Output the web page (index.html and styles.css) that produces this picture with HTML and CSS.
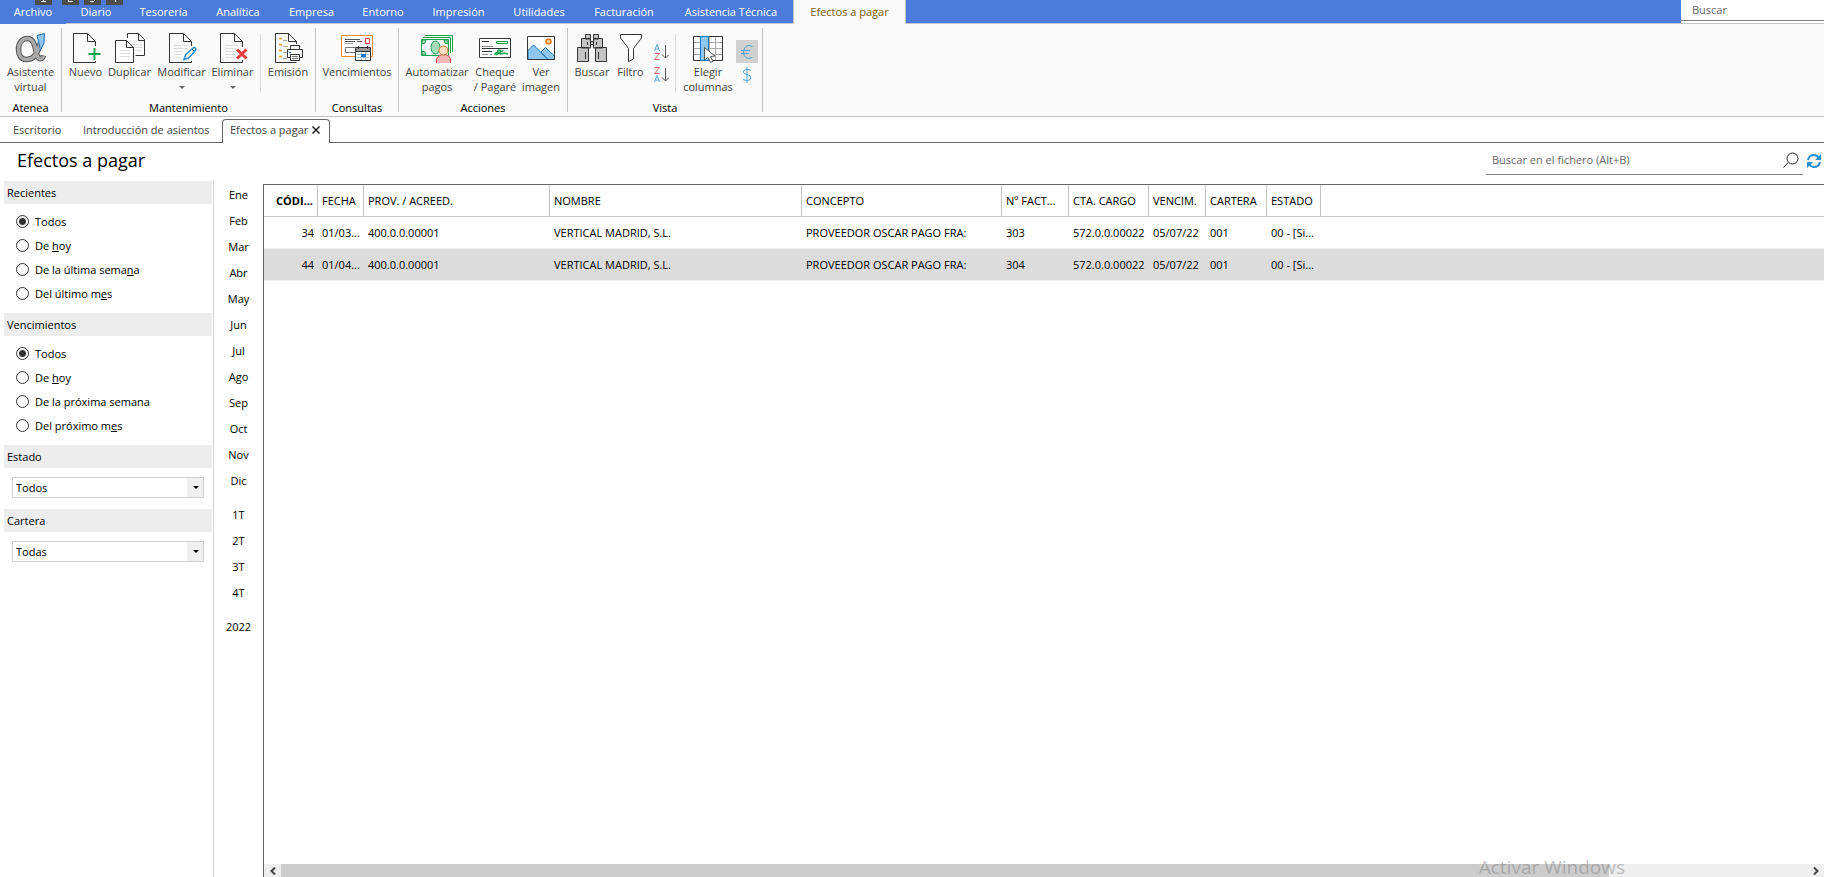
FILE: index.html
```html
<!DOCTYPE html>
<html lang="es">
<head>
<meta charset="utf-8">
<title>Efectos a pagar</title>
<link rel="stylesheet" href="styles.css">
</head>
<body>
<header class="menubar">
  <nav class="menu">
    <a class="menu-item file" href="#">Archivo</a>
    <a class="menu-item" href="#">Diario</a>
    <a class="menu-item" href="#">Tesorería</a>
    <a class="menu-item" href="#">Analítica</a>
    <a class="menu-item" href="#">Empresa</a>
    <a class="menu-item" href="#">Entorno</a>
    <a class="menu-item" href="#">Impresión</a>
    <a class="menu-item" href="#">Utilidades</a>
    <a class="menu-item" href="#">Facturación</a>
    <a class="menu-item" href="#">Asistencia Técnica</a>
    <a class="menu-item active" href="#">Efectos a pagar</a>
  </nav>
  <input class="top-search" type="text" placeholder="Buscar" aria-label="Buscar">
  <div class="keytips" aria-hidden="true">
    <svg class="keytip" viewBox="0 0 17 5"><path d="M6 1.500H11M8.500 0V1" stroke="#fff"/></svg>
    <svg class="keytip" viewBox="0 0 17 5"><path d="M6 1.500H11M6.500 0V1" stroke="#fff"/></svg>
    <svg class="keytip" viewBox="0 0 17 5"><path d="M6 1.500H10M10.500 0V1" stroke="#fff"/></svg>
    <svg class="keytip" viewBox="0 0 17 5"><path d="M9.500 0V2" stroke="#fff"/></svg>
  </div>
</header>

<section class="ribbon">
  <div class="group atenea">
    <div class="tools">
      <button class="tool">
        <svg class="icon" viewBox="0 0 32 32" fill="none"><path d="M26 9C22 24 18 27.500 11.500 27.500C6 27.500 3.500 23 3.500 17.500C3.500 11 7 6.500 12.500 6.500C20 6.500 20 17 22 23C23.500 28 27 28 28.500 23.500" stroke="#555" stroke-width="5.500"/><path d="M25.500 10C22 24 18 27.500 11.500 27.500C6 27.500 3.500 23 3.500 17.500C3.500 11 7 6.500 12.500 6.500C20 6.500 20 17 22 23C23.500 28 27 28 28.500 24" stroke="#aaa" stroke-width="3.500"/><path d="M22 3.500 29.500 1.500 29 11 25.500 18Z" fill="#8ec6ee" stroke="#1e73b8"/></svg>
        <span>Asistente<br>virtual</span></button>
    </div>
    <h2 class="group-name">Atenea</h2>
  </div>
  <div class="group mantenimiento">
    <div class="tools">
      <button class="tool">
        <svg class="icon" viewBox="0 0 32 32" fill="none"><path d="M25.500 14V9.500L17.500 1.500H3.500V30.500H25.500V29M17.500 1.500V9.500H25.500" stroke="#333"/><path d="M24.500 16V28M18.500 22H30.500" stroke="#16a34f" stroke-width="2"/></svg>
        <span>Nuevo</span></button>
      <button class="tool">
        <svg class="icon" viewBox="0 0 32 32" fill="none"><path d="M13.500 1.500H24.500L30.500 7.500V23.500H21.500M13.500 1.500V6M24.500 1.500V8.500H30.500" stroke="#333"/><path d="M17 12.500H28M21 15.500H28M21 18.500H28" stroke="#ddd"/><path d="M1.500 8.500H12.500L19.500 15.500V30.500H1.500ZM12.500 8.500V15.500H19.500" fill="#fff" stroke="#333"/><path d="M6 18.500H16M6 21.500H16M6 24.500H16" stroke="#ddd"/></svg>
        <span>Duplicar</span></button>
      <button class="tool">
        <svg class="icon" viewBox="0 0 32 32" fill="none"><path d="M25.500 14V9.500L17.500 1.500H3.500V30.500H25.500V29M17.500 1.500V9.500H25.500" stroke="#333"/><path d="M8 13.500H21M8 16.500H21M8 19.500H17M8 22.500H16M8 25.500H15" stroke="#ddd"/><path d="M18 27.500 19.500 23 27 16Q29 14.500 30 17Q29.500 19 22.500 26Z" fill="#fff" stroke="#2b8fd0" stroke-width="1.500"/><path d="M26 17 29 20" stroke="#2b8fd0"/></svg>
        <span>Modificar</span><i class="drop"></i></button>
      <button class="tool">
        <svg class="icon" viewBox="0 0 32 32" fill="none"><path d="M25.500 15V9.500L17.500 1.500H3.500V30.500H25.500V28M17.500 1.500V9.500H25.500" stroke="#333"/><path d="M8 13.500H21M8 16.500H19M8 19.500H18M8 22.500H18M8 25.500H17" stroke="#ddd"/><path d="M20 17.500 29.500 26.500M29.500 17.500 20 26.500" stroke="#e83b3b" stroke-width="3"/></svg>
        <span>Eliminar</span><i class="drop"></i></button>
      <div class="divider"></div>
      <button class="tool">
        <svg class="icon" viewBox="0 0 32 32" fill="none"><path d="M24.500 12V9.500L16.500 1.500H3.500V30.500H24.500M16.500 1.500V9.500H24.500" stroke="#333"/><path d="M7 6.500H10M7 12.500H10M7 18.500H10M7 24.500H10" stroke="#f59a23" stroke-width="1.500"/><path d="M11 8.500H15M11 14.500H16M11 20.500H15M11 26.500H15" stroke="#aaa"/><path d="M18.500 17V13.500H27.500V17M18.500 25.500H15.500V17.500H30.500V25.500H27.500" fill="#fff" stroke="#333"/><path d="M18.500 22.500H27.500V28.500H18.500Z" fill="#fff" stroke="#333"/><path d="M20 24.500H26M20 26.500H26" stroke="#777"/><path d="M17 20.500H19" stroke="#1e73d0"/></svg>
        <span>Emisión</span></button>
    </div>
    <h2 class="group-name">Mantenimiento</h2>
  </div>
  <div class="group consultas">
    <div class="tools">
      <button class="tool">
        <svg class="icon" viewBox="0 0 32 32" fill="none"><path d="M.500 3.500H31.500V24.500H.500Z" fill="#fff" stroke="#ed8b2d"/><path d="M4 7.500H19M4 9.500H14M16 9.500H21" stroke="#555"/><path d="M4 11.500H12" stroke="#aaa"/><path d="M24.500 6.500H28.500V11.500H24.500Z" stroke="#e83b3b"/><path d="M14 15.500H4.500V20.500H14" stroke="#777"/><path d="M14.500 15.500H29.500V28.500H14.500Z" fill="#fff" stroke="#333"/><path d="M15 16H29V19H15Z" fill="#999"/><path d="M17.500 14V17M26.500 14V17M15 19.500H29" stroke="#333"/><path d="M16 22.500H28M16 25.500H28M20.500 20V28M24.500 20V28" stroke="#a9c3dc"/><path d="M20 22H25V25H20Z" fill="#1673c0"/></svg>
        <span>Vencimientos</span></button>
    </div>
    <h2 class="group-name">Consultas</h2>
  </div>
  <div class="group acciones">
    <div class="tools">
      <button class="tool">
        <svg class="icon" viewBox="0 0 32 32" fill="none"><path d="M4 3.500H31.500V20M2 5.500H29.500V21" stroke="#16a34f"/><path d="M.500 7.500H27.500V23.500H.500Z" fill="#fff" stroke="#16a34f"/><path d="M1 8H5Q5 12 1 12ZM1 19Q5 19 5 23H1ZM27 8H23Q23 12 27 12Z" fill="#a7d8b8" stroke="#16a34f"/><ellipse cx="14.500" cy="15.500" rx="4.500" ry="6.500" fill="#a7d8b8" stroke="#16a34f"/><path d="M15.500 31V27Q18 22.500 23 22.500Q28 22.500 29.500 27V31" fill="#f3b5b8" stroke="#e8484f"/><circle cx="22.500" cy="18.500" r="4.500" fill="#fbe0c0" stroke="#d07830"/></svg>
        <span>Automatizar<br>pagos</span></button>
      <button class="tool">
        <svg class="icon" viewBox="0 0 32 32" fill="none"><path d="M.500 6.500H31.500V25.500H.500Z" fill="#fff" stroke="#333"/><path d="M3 9.500H10M3 16.500H29M3 19.500H13" stroke="#333"/><path d="M3 14.500H14M3 22.500H9M11 22.500H13" stroke="#888"/><path d="M17.500 9.500H28.500V11.500H17.500Z" stroke="#16a34f"/><path d="M22 18.500Q18 17 19 20Q14 22 17 22.500C20 23 20 19 23 19Q19 22 22 22L25 21L29 22" stroke="#16a34f" stroke-width="1.500"/></svg>
        <span>Cheque<br>/ Pagaré</span></button>
      <button class="tool">
        <svg class="icon" viewBox="0 0 32 32" fill="none"><path d="M2.500 4.500H29.500V27.500H2.500Z" fill="#fff"/><path d="M3 18.500 8.500 13 23 27.500H3Z" fill="#8fc8ef" stroke="#1673b8"/><path d="M16 20 20.500 15.500 29.500 24V27.500H23Z" fill="#8fc8ef" stroke="#1673b8"/><path d="M2.500 4.500H29.500V27.500H2.500Z" stroke="#333"/><circle cx="23.500" cy="9.500" r="2.500" fill="#fbd28b" stroke="#e47a22" stroke-width="1.500"/></svg>
        <span>Ver<br>imagen</span></button>
    </div>
    <h2 class="group-name">Acciones</h2>
  </div>
  <div class="group vista">
    <div class="tools">
      <button class="tool">
        <svg class="icon" viewBox="0 0 32 32" fill="#c4c4c4" stroke="#333"><path d="M9.500 2.500H14.500V7H9.500ZM17.500 2.500H22.500V7H17.500ZM5.500 6.500H14.500V16H5.500ZM17.500 6.500H26.500V16H17.500ZM14.500 9.500H17.500V12.500H14.500ZM1.500 15.500H12.500V29.500H1.500ZM19.500 15.500H30.500V29.500H19.500ZM11.500 10V13M20.500 10V13M9.500 20V27M22.500 20V27"/></svg>
        <span>Buscar</span></button>
      <button class="tool">
        <svg class="icon" viewBox="0 0 32 32" fill="#fff" stroke="#333"><path d="M5.500 2.500H26.500V6L18.500 16.500V27L13.500 29.500V16.500L5.500 6Z"/></svg>
        <span>Filtro</span></button>
      <div class="stack sort">
        <button class="mini" aria-label="Orden ascendente"><svg viewBox="0 0 16 18" width="16" height="18" fill="none"><path d="M1.500 8 4 1.500 6.500 8M2 6H6" stroke="#5aa9da"/><path d="M1.500 10.500H6.500L1.500 16.500H6.500" stroke="#f07070"/><path d="M12.500 2V15M9 11.500 12.500 15 16 11.500" stroke="#555"/></svg></button>
        <button class="mini" aria-label="Orden descendente"><svg viewBox="0 0 16 18" width="16" height="18" fill="none"><path d="M1.500 1.500H6.500L1.500 7.500H6.500" stroke="#f07070"/><path d="M1.500 16 4 9.500 6.500 16M2 14H6" stroke="#5aa9da"/><path d="M12.500 2V15M9 11.500 12.500 15 16 11.500" stroke="#555"/></svg></button>
      </div>
      <div class="divider"></div>
      <button class="tool">
        <svg class="icon" viewBox="0 0 32 32" fill="none"><path d="M1.500 4.500H30.500V28.500H1.500Z" fill="#fff"/><path d="M2 10.500H30M2 16.500H30M2 22.500H30M17.500 5V28M23.500 5V28" stroke="#aaa"/><path d="M1.500 4.500H30.500V28.500H1.500Z" stroke="#333"/><path d="M8.500 4.500H16.500V28.500H8.500Z" fill="#8fc8ef" stroke="#1673b8"/><path d="M12.500 15.500V28L16 25.500 18.500 30.500 21 29.500 18.500 24.500 23 24Z" fill="#fff" stroke="#555"/></svg>
        <span>Elegir<br>columnas</span></button>
      <div class="stack">
        <button class="currency on" aria-label="Euro"><svg viewBox="0 0 14 16" width="14" height="16" fill="none" stroke="#4ca3d8"><path d="M12.500 2.500Q5 -1 3.500 7.500Q4 17 12.500 13.500M1 6.500H10M1 9.500H9"/></svg></button>
        <button class="currency" aria-label="Dólar"><svg viewBox="0 0 14 16" width="14" height="16" fill="none" stroke="#4ca3d8"><path d="M11 3.500Q8 2 6 2.500Q3 3 3.500 5.500Q4 7 7 7.500Q11 8.500 11 11Q10 14 6.500 13.500L3 12.500M7 0V16"/></svg></button>
      </div>
    </div>
    <h2 class="group-name">Vista</h2>
  </div>
</section>

<nav class="tabs">
  <a class="tab desk" href="#">Escritorio</a>
  <a class="tab entry" href="#">Introducción de asientos</a>
  <div class="tab current"><a href="#">Efectos a pagar</a><button class="close" aria-label="Cerrar"><svg viewBox="0 0 8 8" width="8" height="8" stroke="#222" stroke-width="1.500"><path d="M.500 .500 7.500 7.500M7.500 .500 .500 7.500"/></svg></button></div>
  <div class="tab-rest"></div>
</nav>

<div class="titlebar">
  <h1 class="title">Efectos a pagar</h1>
  <div class="search">
    <input type="text" placeholder="Buscar en el fichero (Alt+B)" aria-label="Buscar en el fichero">
    <button class="bare" aria-label="Buscar"><svg viewBox="0 0 16 16" width="16" height="16" fill="none" stroke="#222"><circle cx="9.500" cy="6.500" r="5.500"/><path d="M5.500 10.500 .500 15.500"/></svg></button>
  </div>
  <button class="bare" aria-label="Actualizar"><svg viewBox="0 0 16 16" width="16" height="16" fill="none" stroke="#2b8fd0" stroke-width="2"><path d="M2 7Q3 2 8 2Q11 2 13 5M14 9Q13 14 8 14Q5 14 3 11"/><path d="M15 1V7H9ZM1 15V9H7Z" fill="#2b8fd0" stroke="none"/></svg></button>
</div>

<main class="work">
  <aside class="filters">
    <fieldset class="box">
      <legend class="box-name">Recientes</legend>
      <div class="options">
        <label><input type="radio" name="recientes" checked>Todos</label>
        <label><input type="radio" name="recientes"><span>De <u>h</u>oy</span></label>
        <label><input type="radio" name="recientes"><span>De la última sema<u>n</u>a</span></label>
        <label><input type="radio" name="recientes"><span>Del último m<u>e</u>s</span></label>
      </div>
    </fieldset>
    <fieldset class="box">
      <legend class="box-name">Vencimientos</legend>
      <div class="options">
        <label><input type="radio" name="vencimientos" checked>Todos</label>
        <label><input type="radio" name="vencimientos"><span>De <u>h</u>oy</span></label>
        <label><input type="radio" name="vencimientos">De la próxima semana</label>
        <label><input type="radio" name="vencimientos"><span>Del próximo m<u>e</u>s</span></label>
      </div>
    </fieldset>
    <div class="box">
      <label class="box-name" for="estado">Estado</label>
      <div class="pick"><select id="estado"><option>Todos</option></select></div>
    </div>
    <div class="box">
      <label class="box-name" for="cartera">Cartera</label>
      <div class="pick"><select id="cartera"><option>Todas</option></select></div>
    </div>
  </aside>
  <nav class="periods">
    <div class="months"><a href="#">Ene</a><a href="#">Feb</a><a href="#">Mar</a><a href="#">Abr</a><a href="#">May</a><a href="#">Jun</a><a href="#">Jul</a><a href="#">Ago</a><a href="#">Sep</a><a href="#">Oct</a><a href="#">Nov</a><a href="#">Dic</a></div>
    <div class="months"><a href="#">1T</a><a href="#">2T</a><a href="#">3T</a><a href="#">4T</a></div>
    <div class="months"><a href="#">2022</a></div>
  </nav>
  <section class="list">
    <table class="grid">
      <colgroup><col class="c-cod"><col class="c-fecha"><col class="c-prov"><col class="c-nombre"><col class="c-concepto"><col class="c-fact"><col class="c-cta"><col class="c-venc"><col class="c-cartera"><col class="c-estado"><col></colgroup>
      <thead><tr><th class="num key">CÓDI...</th><th>FECHA</th><th>PROV. / ACREED.</th><th>NOMBRE</th><th>CONCEPTO</th><th>Nº FACT...</th><th>CTA. CARGO</th><th>VENCIM.</th><th>CARTERA</th><th>ESTADO</th><td></td></tr></thead>
      <tbody>
        <tr><td class="num">34</td><td>01/03...</td><td>400.0.0.00001</td><td>VERTICAL MADRID, S.L.</td><td>PROVEEDOR OSCAR PAGO FRA:</td><td>303</td><td>572.0.0.00022</td><td>05/07/22</td><td>001</td><td>00 - [Si...</td><td></td></tr>
        <tr class="selected"><td class="num">44</td><td>01/04...</td><td>400.0.0.00001</td><td>VERTICAL MADRID, S.L.</td><td>PROVEEDOR OSCAR PAGO FRA:</td><td>304</td><td>572.0.0.00022</td><td>05/07/22</td><td>001</td><td>00 - [Si...</td><td></td></tr>
      </tbody>
    </table>
    <div class="scroll">
      <button class="arrow" aria-label="Izquierda"><svg viewBox="0 0 6 8" width="6" height="8" fill="none" stroke="#444" stroke-width="2"><path d="M5 .500 1.500 4 5 7.500"/></svg></button>
      <div class="track"><div class="thumb"></div></div>
      <button class="arrow" aria-label="Derecha"><svg viewBox="0 0 6 8" width="6" height="8" fill="none" stroke="#444" stroke-width="2"><path d="M1 .500 4.500 4 1 7.500"/></svg></button>
    </div>
  </section>
</main>
<div class="watermark">Activar Windows</div>
</body>
</html>
```
FILE: styles.css
```css
* { box-sizing: border-box; }

body {
  margin: 0;
  height: 100vh;
  display: flex;
  flex-direction: column;
  overflow: hidden;
  position: relative;
  background: #fff;
  color: #000;
  font: 11px/15px "Open Sans", "Noto Sans", sans-serif;
}

button, input, select { font: inherit; color: inherit; }
button { margin: 0; padding: 0; border: 0; background: none; }
a { color: inherit; text-decoration: none; }
h1, h2 { margin: 0; font-weight: 400; }
svg { display: block; }

/* Menu bar */
.menubar {
  position: relative;
  display: flex;
  justify-content: space-between;
  height: 24px;
  background: #4c7bdc;
  border-bottom: 1px solid #c3c6cc;
}
.menu {
  display: grid;
  grid-template-columns: 66px 60px 75px 74px 73px 70px 81px 80px 90px 124px 113px;
}
.menu-item { color: #fff; line-height: 23px; text-align: center; white-space: nowrap; }
.menu-item.file { background: #4c7bdc; margin-bottom: -1px; }
.menu-item.active {
  margin-bottom: -1px;
  background: #fafafa;
  color: #7d5a08;
  border: solid #c3c6cc;
  border-width: 0 1px;
}
.top-search {
  width: 143px;
  height: 23px;
  padding: 0 11px 5px;
  border: 0;
  background: linear-gradient(#808080, #808080) 0 20px / 100% 1px no-repeat #fff;
}
::placeholder { color: #666; opacity: 1; }
.keytips {
  position: absolute;
  top: 0;
  left: 35px;
  display: flex;
  gap: 5px;
}
.keytip { width: 17px; height: 5px; background: #4d4d4d; }
.keytip:first-child { margin-right: 5px; }

/* Ribbon */
.ribbon {
  display: flex;
  height: 93px;
  padding: 4px 0;
  background: #fafafa;
  border-bottom: 1px solid #c3c3c3;
}
.group {
  display: flex;
  flex-direction: column;
  justify-content: space-between;
  border-right: 1px solid #c3c3c3;
}
.atenea { width: 62px; }
.mantenimiento { width: 254px; }
.consultas { width: 83px; }
.acciones { width: 169px; }
.vista { width: 195px; }
.tools { display: grid; padding-top: 4px; }
.mantenimiento .tools { grid-template-columns: 39px 49px 55px 47px 5px 54px; padding-left: 4px; }
.mantenimiento .divider { justify-self: end; }
.acciones .tools { grid-template-columns: 70px 46px 46px; padding-left: 3px; }
.vista .tools { grid-template-columns: 42px 35px 27px 5px 56px 22px; padding-left: 3px; }
.tool {
  display: flex;
  flex-direction: column;
  align-items: center;
  color: #444;
  white-space: nowrap;
}
.icon { width: 32px; height: 32px; }
.drop {
  margin-top: 7px;
  border: solid transparent;
  border-width: 3px 3px 0;
  border-top-color: #666;
}
.divider { width: 1px; height: 59px; margin-top: 2px; background: #dcdcdc; }
.group-name { font-size: 11px; line-height: 15px; text-align: center; margin-bottom: -3px; }
.stack { display: flex; flex-direction: column; align-items: center; padding-top: 8px; }
.sort { gap: 5px; padding-top: 11px; padding-right: 2px; }
.currency { display: grid; place-items: center; width: 22px; height: 23px; }
.currency.on { background: #d0d0d0; }

/* Document tabs */
.tabs { display: flex; height: 26px; padding-top: 2px; color: #444; }
.tab { border-bottom: 1px solid #666; line-height: 22px; white-space: nowrap; }
.desk { width: 72px; padding-left: 13px; }
.entry { width: 150px; padding-left: 11px; }
.tab.current {
  display: flex;
  align-items: center;
  justify-content: space-between;
  width: 108px;
  padding: 0 9px 3px 7px;
  border: 1px solid #666;
  border-bottom: 0;
  border-radius: 4px 4px 0 0;
}
.tab-rest { flex: 1; border-bottom: 1px solid #666; }

/* Title row */
.titlebar { display: flex; align-items: flex-start; height: 38px; padding-right: 2px; }
.title { flex: 1; padding: 4px 0 0 17px; font-size: 18px; line-height: 26px; }
.search {
  display: flex;
  align-items: center;
  width: 317px;
  height: 32px;
  padding: 2px 4px 0 6px;
  border-bottom: 1px solid #808080;
}
.search input { flex: 1; padding: 0; border: 0; outline: 0; }
.titlebar > .bare { margin: 10px 0 0 3px; }

/* Work area */
.work { flex: 1; display: flex; min-height: 0; }
.filters { width: 214px; padding: 0 1px 0 4px; border-right: 1px solid #d3d3d3; }
.box { margin: 0; padding: 0; border: 0; min-width: 0; }
.box-name { display: block; width: 100%; padding: 0 3px; background: #ededed; line-height: 23px; }
.options { display: flex; flex-direction: column; padding: 5px 0 8px 12px; }
.options label { display: flex; align-items: center; gap: 6px; height: 24px; }
.options input {
  appearance: none;
  width: 13px;
  height: 13px;
  margin: 0;
  border: 1px solid #333;
  border-radius: 50%;
  background: #fff;
}
.options input:checked { background: radial-gradient(circle, #333 3px, #fff 4px); }
.pick { position: relative; padding: 9px 8px 11px; }
.pick select {
  display: block;
  appearance: none;
  width: 100%;
  height: 21px;
  padding: 0 3px;
  border: 1px solid #d0d0d0;
  border-radius: 0;
  background: linear-gradient(#f0f0f0, #f0f0f0) right / 16px 100% no-repeat #fff;
}
.pick::after {
  content: "";
  position: absolute;
  top: 18px;
  right: 13px;
  border: solid transparent;
  border-width: 3px 3px 0;
  border-top-color: #000;
}

.periods { display: flex; flex-direction: column; gap: 8px; width: 49px; padding-top: 1px; }
.months a { display: block; line-height: 26px; text-align: center; }

.list {
  flex: 1;
  min-width: 0;
  display: flex;
  flex-direction: column;
  justify-content: space-between;
  margin-top: 3px;
  border: solid #666;
  border-width: 1px 0 0 1px;
}
.grid { width: 100%; table-layout: fixed; border-collapse: separate; border-spacing: 0; }
.c-cod, .c-estado { width: 54px; }
.c-fecha { width: 46px; }
.c-prov { width: 186px; }
.c-nombre { width: 252px; }
.c-concepto { width: 200px; }
.c-fact { width: 67px; }
.c-cta { width: 80px; }
.c-venc { width: 57px; }
.c-cartera { width: 61px; }
.grid th, .grid td {
  height: 32px;
  padding: 0 0 0 4px;
  border-bottom: 1px solid #efefef;
  font-weight: 400;
  text-align: left;
  white-space: nowrap;
}
.grid thead th, .grid thead td { border-bottom-color: #c3c3c3; }
.grid th { border-right: 1px solid #c3c3c3; }
.grid .num { padding-right: 4px; text-align: right; }
.grid .key { font-weight: 700; }
.selected td { background: #dcdcdc; background-clip: padding-box; }

.scroll { display: flex; height: 13px; background: #efefef; }
.arrow { display: grid; place-items: center; width: 17px; }
.track { flex: 1; }
.thumb { width: 87%; height: 100%; background: #ccc; }

.watermark {
  position: absolute;
  right: 199px;
  bottom: -3px;
  color: rgba(120, 120, 120, 0.45);
  font-size: 19px;
  line-height: 26px;
}
```
